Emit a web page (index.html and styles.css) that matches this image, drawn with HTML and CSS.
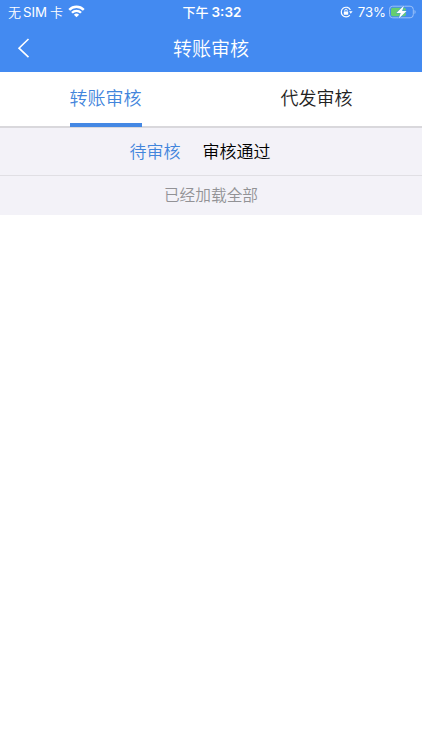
FILE: index.html
```
<!DOCTYPE html>
<html lang="zh-CN">
<head>
    <meta charset="UTF-8">
    <meta name="viewport" content="width=device-width, initial-scale=1.0">
    <title>转账审核</title>
    <link rel="stylesheet" href="styles.css">
</head>
<body>
    <header class="header">
        <div class="status-bar">
            <div class="status-left">
                <span class="carrier">无<span class="latin">SIM</span> 卡</span>
                <svg class="wifi" width="17" height="12.3" viewBox="0 0 18 13">
                    <g fill="none" stroke="#fff" stroke-width="2.6">
                        <path d="M1.3 5.1a10.9 10.9 0 0 1 15.4 0"/>
                        <path d="M4.2 8.2a6.8 6.8 0 0 1 9.6 0"/>
                    </g>
                    <path d="M9 13 6.2 10.4a3.9 3.9 0 0 1 5.6 0z" fill="#fff"/>
                </svg>
            </div>
            <div class="time">下午 <span class="latin">3:32</span></div>
            <div class="status-right">
                <svg class="lock" width="13" height="12" viewBox="0 0 13 12">
                    <path d="M10.4 4A4.8 4.8 0 1 0 9.8 9.1" fill="none" stroke="#fff" stroke-width="1.2"/>
                    <path d="M9 5.2h3.6l-1.8 2.6z" fill="#fff"/>
                    <rect x="3.8" y="5.4" width="4.4" height="3.3" rx=".5" fill="#fff"/>
                    <path d="M4.8 5.5V4.4a1.2 1.2 0 0 1 2.4 0v1.1" fill="none" stroke="#fff" stroke-width=".9"/>
                </svg>
                <span class="percent">73%</span>
                <svg class="battery" width="27" height="14" viewBox="0 0 27 14">
                    <rect x=".5" y="1.2" width="23.8" height="11.6" rx="3.2" fill="none" stroke="#9cc1f9"/>
                    <path d="M25.5 5v4c1.5-.7 1.5-3.3 0-4z" fill="#9cc1f9"/>
                    <rect x="2" y="2.7" width="14.8" height="8.6" rx="1.7" fill="#65ce70"/>
                    <path d="M15 .4 7.4 7.9h4.3L9.8 13.6l7.8-7.7h-4.5z" fill="#fff" stroke="#438af1" stroke-width=".8" paint-order="stroke"/>
                </svg>
            </div>
        </div>
        <div class="nav-bar">
            <a class="back" href="#" aria-label="返回">
                <svg width="13" height="20" viewBox="0 0 13 20">
                    <path d="M11.5 1 2 10.2l9.5 9" fill="none" stroke="#fff" stroke-width="1.6"/>
                </svg>
            </a>
            <h1>转账审核</h1>
        </div>
    </header>

    <nav class="tabs">
        <div class="tab"><span class="tab-text active">转账审核</span></div>
        <div class="tab"><span class="tab-text">代发审核</span></div>
    </nav>

    <div class="filters">
        <span class="filter active">待审核</span>
        <span class="filter">审核通过</span>
    </div>

    <div class="load-end">已经加载全部</div>
</body>
</html>
```
FILE: styles.css
```
* {
    box-sizing: border-box;
}
body {
    margin: 0;
    background-color: white;
    font-family: "Noto Sans CJK SC", sans-serif;
    font-weight: 350;
}
.header {
    height: 72px;
    background-color: #438af1;
    color: white;
}
.status-bar {
    display: grid;
    grid-template-columns: 1fr auto 1fr;
    align-items: center;
    height: 24px;
    padding: 0 6px 0 8px;
    font-size: 13px;
    line-height: 24px;
    white-space: nowrap;
}
.status-left,
.status-right {
    display: flex;
    align-items: center;
}
.latin,
.percent {
    font-family: Inter, sans-serif;
    font-weight: 400;
}
.carrier .latin {
    margin-left: 2px;
    font-size: 13.3px;
}
.wifi {
    margin-left: 5px;
    margin-top: -1px;
}
.time {
    font-weight: 500;
}
.time .latin {
    font-size: 13.5px;
    font-weight: 600;
}
.status-right {
    justify-content: flex-end;
}
.percent {
    margin: 0 3px 0 5px;
    font-size: 13.2px;
}
.nav-bar {
    display: grid;
    grid-template-columns: 60px 1fr 60px;
    align-items: center;
    height: 48px;
}
.back {
    display: flex;
    padding-left: 17px;
}
.nav-bar h1 {
    margin: 0;
    font-size: 19px;
    font-weight: 350;
    line-height: 46px;
    text-align: center;
}
.tabs {
    display: flex;
    height: 56px;
    border-bottom: 2px solid #d9d8dc;
}
.tab {
    flex: 1;
    display: flex;
    justify-content: center;
}
.tab-text {
    height: 55px;
    border-bottom: 4px solid transparent;
    color: #222;
    font-size: 18px;
    line-height: 51px;
}
.tab-text.active {
    border-bottom-color: #4488e4;
    color: #4285dc;
}
.filters {
    display: flex;
    justify-content: center;
    gap: 22px;
    height: 48px;
    padding-right: 22px;
    border-bottom: 1px solid #e0dfe4;
    background-color: #f3f2f8;
    color: #000;
    font-size: 17px;
    line-height: 45px;
}
.filter.active {
    color: #4285dc;
}
.load-end {
    height: 39px;
    background-color: #f3f2f8;
    color: #929296;
    font-size: 15.7px;
    line-height: 38px;
    text-align: center;
}
```
